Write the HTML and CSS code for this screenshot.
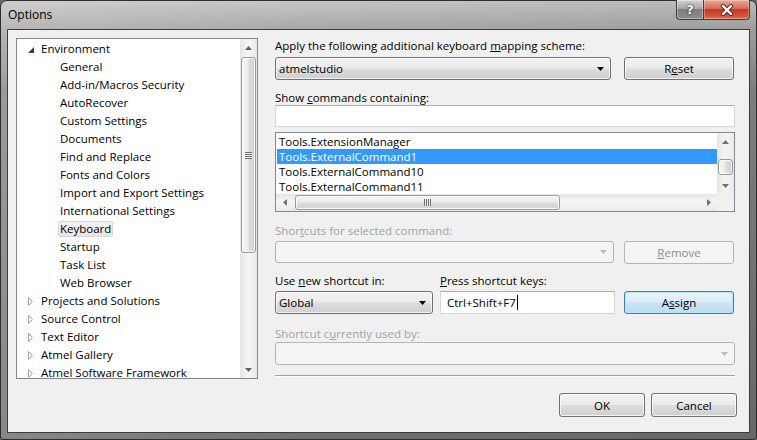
FILE: index.html
```html
<!DOCTYPE html>
<html>
<head>
<meta charset="utf-8">
<title>Options</title>
<link rel="stylesheet" href="styles.css">
</head>
<body>
<div class="window">
  <div class="titlebar">
    <span class="title">Options</span>
    <div class="caption">
      <div class="cap-help">?</div>
      <div class="cap-close">
        <svg width="14" height="12" viewBox="0 0 14 12"><path d="M3 2 L11 10 M11 2 L3 10" stroke="#5a2a20" stroke-width="4.2" stroke-linecap="round"/><path d="M3 2 L11 10 M11 2 L3 10" stroke="#ffffff" stroke-width="2.4" stroke-linecap="round"/></svg>
      </div>
    </div>
  </div>
  <div class="client">
    <div class="main">
      <div class="tree">
        <div class="tree-items">
          <div class="node l0"><span class="exp"><svg width="6" height="6" viewBox="0 0 6 6"><polygon points="6,0 6,6 0,6" fill="#3c3c3c"/></svg></span>Environment</div>
          <div class="node l1">General</div>
          <div class="node l1">Add-in/Macros Security</div>
          <div class="node l1">AutoRecover</div>
          <div class="node l1">Custom Settings</div>
          <div class="node l1">Documents</div>
          <div class="node l1">Find and Replace</div>
          <div class="node l1">Fonts and Colors</div>
          <div class="node l1">Import and Export Settings</div>
          <div class="node l1">International Settings</div>
          <div class="node l1"><span class="tree-sel">Keyboard</span></div>
          <div class="node l1">Startup</div>
          <div class="node l1">Task List</div>
          <div class="node l1">Web Browser</div>
          <div class="node l0"><span class="exp"><svg width="6" height="9" viewBox="0 0 6 9"><polygon points="0.5,0.5 4.5,4.5 0.5,8.5" fill="#fff" stroke="#a6a6a6"/></svg></span>Projects and Solutions</div>
          <div class="node l0"><span class="exp"><svg width="6" height="9" viewBox="0 0 6 9"><polygon points="0.5,0.5 4.5,4.5 0.5,8.5" fill="#fff" stroke="#a6a6a6"/></svg></span>Source Control</div>
          <div class="node l0"><span class="exp"><svg width="6" height="9" viewBox="0 0 6 9"><polygon points="0.5,0.5 4.5,4.5 0.5,8.5" fill="#fff" stroke="#a6a6a6"/></svg></span>Text Editor</div>
          <div class="node l0"><span class="exp"><svg width="6" height="9" viewBox="0 0 6 9"><polygon points="0.5,0.5 4.5,4.5 0.5,8.5" fill="#fff" stroke="#a6a6a6"/></svg></span>Atmel Gallery</div>
          <div class="node l0"><span class="exp"><svg width="6" height="9" viewBox="0 0 6 9"><polygon points="0.5,0.5 4.5,4.5 0.5,8.5" fill="#fff" stroke="#a6a6a6"/></svg></span>Atmel Software Framework</div>
        </div>
        <div class="vscroll tree-scroll">
          <div class="sb-btn"><svg width="7" height="4" viewBox="0 0 7 4"><polygon points="0,4 3.5,0 7,4" fill="#606060"/></svg></div>
          <div class="sb-track">
            <div class="thumb tree-thumb"><span class="grip-v"></span></div>
          </div>
          <div class="sb-btn"><svg width="7" height="4" viewBox="0 0 7 4"><polygon points="0,0 3.5,4 7,0" fill="#606060"/></svg></div>
        </div>
      </div>

      <div class="panel">
        <div class="lbl">Apply the following additional keyboard <u>m</u>apping scheme:</div>
        <div class="row r-scheme">
          <div class="combo w-scheme"><span>atmelstudio</span><svg class="dd" width="7" height="4" viewBox="0 0 7 4"><polygon points="0,0 3.5,4 7,0" fill="#000"/></svg></div>
          <div class="btn w-btn">R<u>e</u>set</div>
        </div>
        <div class="lbl m-show">Show <u>c</u>ommands containing:</div>
        <div class="textbox full"></div>
        <div class="list">
          <div class="list-body">
            <div class="list-items">
              <div class="item">Tools.ExtensionManager</div>
              <div class="item sel">Tools.ExternalCommand1</div>
              <div class="item">Tools.ExternalCommand10</div>
              <div class="item">Tools.ExternalCommand11</div>
            </div>
            <div class="vscroll list-vscroll">
              <div class="sb-btn"><svg width="7" height="4" viewBox="0 0 7 4"><polygon points="0,4 3.5,0 7,4" fill="#707070"/></svg></div>
              <div class="sb-track">
                <div class="thumb list-thumb"></div>
              </div>
              <div class="sb-btn"><svg width="7" height="4" viewBox="0 0 7 4"><polygon points="0,0 3.5,4 7,0" fill="#707070"/></svg></div>
            </div>
          </div>
          <div class="hrow">
            <div class="hscroll">
              <div class="sb-btn h"><svg width="4" height="7" viewBox="0 0 4 7"><polygon points="4,0 0,3.5 4,7" fill="#707070"/></svg></div>
              <div class="h-track">
                <div class="hthumb"><span class="grip-h"></span></div>
              </div>
              <div class="sb-btn h"><svg width="4" height="7" viewBox="0 0 4 7"><polygon points="0,0 4,3.5 0,7" fill="#707070"/></svg></div>
            </div>
            <div class="corner"></div>
          </div>
        </div>
        <div class="lbl dis m-short">Shor<u>t</u>cuts for selected command:</div>
        <div class="row r-short">
          <div class="combo disabled w-short"><span></span><svg class="dd" width="7" height="4" viewBox="0 0 7 4"><polygon points="0,0 3.5,4 7,0" fill="#b8b8b8"/></svg></div>
          <div class="btn disabled w-btn"><u>R</u>emove</div>
        </div>
        <div class="row r-labels">
          <div class="lbl w-uselbl">Use <u>n</u>ew shortcut in:</div>
          <div class="lbl"><u>P</u>ress shortcut keys:</div>
        </div>
        <div class="row r-new">
          <div class="combo w-global"><span>Global</span><svg class="dd" width="7" height="4" viewBox="0 0 7 4"><polygon points="0,0 3.5,4 7,0" fill="#000"/></svg></div>
          <div class="textbox w-keys"><span>Ctrl+Shift+F7</span><span class="caret"></span></div>
          <div class="btn default w-btn">A<u>s</u>sign</div>
        </div>
        <div class="lbl dis m-used">Shortcut c<u>u</u>rrently used by:</div>
        <div class="combo disabled full m-usedbox"><span></span><svg class="dd" width="7" height="4" viewBox="0 0 7 4"><polygon points="0,0 3.5,4 7,0" fill="#b8b8b8"/></svg></div>
        <div class="separator"></div>
      </div>
    </div>
    <div class="footer">
      <div class="btn w-dlg">OK</div>
      <div class="btn w-dlg">Cancel</div>
    </div>
  </div>
</div>
</body>
</html>
```

FILE: styles.css
```css
* {
  box-sizing: border-box;
}

html,
body {
  margin: 0;
  padding: 0;
}

body {
  width: 757px;
  height: 440px;
  overflow: hidden;
  background: #6a6a6a;
  font-family: "Open Sans", "Noto Sans", sans-serif;
  font-size: 11.5px;
  color: #000;
}

u {
  text-decoration: underline;
  text-underline-offset: 1px;
}

/* ---------- window frame ---------- */
.window {
  width: 757px;
  height: 440px;
  display: flex;
  flex-direction: column;
  padding: 0 6px 6px 6px;
  border: 1px solid #2e2e2e;
  border-radius: 7px 7px 3px 3px;
  background:
    linear-gradient(to right, rgba(255,255,255,0.18), rgba(255,255,255,0) 45%, rgba(0,0,0,0.06)),
    linear-gradient(to bottom, #c4c4c4 0, #a9a9a9 26px, #858585 90px, #6e6e6e 100%);
}

.titlebar {
  height: 28px;
  flex: none;
  display: flex;
  justify-content: space-between;
  align-items: flex-start;
}

.title {
  margin-left: 1px;
  line-height: 28px;
  font-size: 12px;
  color: #000;
}

.caption {
  display: flex;
  margin-top: -1px;
}

.cap-help,
.cap-close {
  height: 20px;
  display: flex;
  align-items: center;
  justify-content: center;
  border: 1px solid #3f3f3f;
  border-top: none;
}

.cap-help {
  width: 27px;
  border-radius: 0 0 0 4px;
  border-right: none;
  background: linear-gradient(to bottom, #d2d2d2 0, #a8a8a8 45%, #7e7e7e 50%, #8e8e8e 100%);
  box-shadow: inset 0 0 0 1px rgba(255,255,255,0.35);
  color: #fff;
  font-family: "DejaVu Sans", sans-serif;
  font-weight: bold;
  font-size: 13px;
  text-shadow: 0 0 2px #222, 0 0 1px #222;
}

.cap-close {
  width: 47px;
  border-radius: 0 0 4px 0;
  background: linear-gradient(to bottom, #e9a99c 0, #d86a54 45%, #c43a1f 50%, #d2563a 85%, #e07a5c 100%);
  box-shadow: inset 0 0 0 1px rgba(255,255,255,0.3);
}

/* ---------- client ---------- */
.client {
  flex: 1;
  display: flex;
  flex-direction: column;
  background: #f0f0f0;
  border: 1px solid #3c3c3c;
  padding: 8px 12px 0 8px;
}

.main {
  display: flex;
  align-items: flex-start;
}

/* ---------- tree ---------- */
.tree {
  width: 242px;
  height: 341px;
  flex: none;
  display: flex;
  background: #fff;
  border: 1px solid #828790;
}

.tree-items {
  flex: 1;
  overflow: hidden;
  padding-top: 1px;
}

.node {
  height: 18px;
  line-height: 18px;
  white-space: nowrap;
  display: flex;
  align-items: center;
}

.node.l0 {
  padding-left: 11px;
}

.node.l1 {
  padding-left: 43px;
}

.exp {
  width: 13px;
  display: flex;
  align-items: center;
  padding-top: 1px;
}

.tree-sel {
  display: inline-block;
  height: 16px;
  line-height: 14px;
  padding: 0 1px;
  margin-left: -2px;
  border: 1px solid #d9d9d9;
  border-radius: 2px;
  background: linear-gradient(to bottom, #f2f2f2, #e5e5e5);
}

/* ---------- scrollbars ---------- */
.vscroll {
  width: 17px;
  flex: none;
  display: flex;
  flex-direction: column;
  background: linear-gradient(to right, #e6e6e6, #f3f3f3 40%, #f3f3f3 60%, #e9e9e9);
}

.sb-btn {
  height: 17px;
  flex: none;
  display: flex;
  align-items: center;
  justify-content: center;
}

.sb-btn.h {
  width: 17px;
  height: 17px;
}

.sb-track {
  flex: 1;
  padding: 1px 1px 0 1px;
}

.thumb {
  border: 1px solid #9a9a9a;
  border-radius: 3px;
  background: linear-gradient(to right, #f6f6f6 0, #ececec 45%, #dcdcdc 55%, #d2d2d2 100%);
  box-shadow: inset 0 0 0 1px rgba(255,255,255,0.8);
  display: flex;
  align-items: center;
  justify-content: center;
}

.tree-thumb {
  height: 196px;
}

.grip-v {
  width: 7px;
  height: 7px;
  background: repeating-linear-gradient(to bottom, #6d6d6d 0, #6d6d6d 1px, #f0f0f0 1px, #f0f0f0 2px);
}

.list-thumb {
  height: 16px;
  margin-top: 8px;
}

/* ---------- panel ---------- */
.panel {
  width: 460px;
  margin-left: 17px;
  display: flex;
  flex-direction: column;
}

.lbl {
  height: 15px;
  line-height: 15px;
  white-space: nowrap;
}

.lbl.dis {
  color: #a2a2a2;
}

.row {
  display: flex;
  align-items: flex-start;
}

.r-scheme {
  margin-top: 4px;
  justify-content: space-between;
}

.m-show {
  margin-top: 10px;
}

.m-short {
  margin-top: 11px;
}

.r-short {
  margin-top: 3px;
  justify-content: space-between;
}

.r-labels {
  margin-top: 9px;
}

.w-uselbl {
  width: 165px;
}

.r-new {
  margin-top: 3px;
}

.m-used {
  margin-top: 12px;
}

.m-usedbox {
  margin-top: 1px;
}

.separator {
  margin-top: 10px;
  height: 2px;
  border-top: 1px solid #a0a0a0;
  border-bottom: 1px solid #ffffff;
}

/* ---------- buttons & combos ---------- */
.btn,
.combo {
  height: 23px;
  border: 1px solid #707070;
  border-radius: 3px;
  background: linear-gradient(to bottom, #f2f2f2 0, #ebebeb 48%, #dddddd 52%, #cfcfcf 100%);
  box-shadow: inset 0 0 0 1px rgba(255,255,255,0.75);
  display: flex;
  align-items: center;
  white-space: nowrap;
}

.btn {
  justify-content: center;
}

.combo {
  justify-content: space-between;
  padding: 0 6px 0 3px;
}

.btn.disabled,
.combo.disabled {
  border-color: #b2b6b9;
  background: #f4f4f4;
  box-shadow: none;
  color: #8c8c8c;
}

.btn.default {
  border-color: #3c7fb1;
  background: linear-gradient(to bottom, #e9f4fb 0, #dcedf9 48%, #c9e4f6 52%, #bcdcf1 100%);
  box-shadow: inset 0 0 0 1px #b6e6fb;
}

.w-scheme {
  width: 336px;
}

.w-btn {
  width: 110px;
  margin-right: 1px;
}

.w-short {
  width: 339px;
  height: 22px;
}

.w-global {
  width: 158px;
  margin-right: 7px;
}

.w-dlg {
  width: 86px;
  height: 24px;
}

.full {
  width: 460px;
}

.textbox {
  height: 22px;
  background: #fff;
  border: 1px solid #d5d7db;
  border-top-color: #abadb3;
  display: flex;
  align-items: center;
}

.w-keys {
  width: 175px;
  height: 23px;
  margin-right: 9px;
  padding-left: 6px;
}

.caret {
  width: 1px;
  height: 15px;
  background: #000;
  margin-left: 1px;
}

/* ---------- list ---------- */
.list {
  margin-top: 5px;
  height: 80px;
  border: 1px solid #828790;
  background: #fff;
  display: flex;
  flex-direction: column;
}

.list-body {
  height: 61px;
  display: flex;
}

.list-items {
  flex: 1;
  padding-top: 1px;
}

.item {
  height: 15px;
  line-height: 15px;
  padding-left: 2px;
  margin-left: 1px;
  white-space: nowrap;
}

.item.sel {
  background: #3399ff;
  color: #fff;
}

.list-vscroll .sb-btn {
  height: 17px;
}

.hrow {
  height: 17px;
  display: flex;
}

.hscroll {
  flex: 1;
  display: flex;
  background: linear-gradient(to bottom, #e6e6e6, #f3f3f3 40%, #f3f3f3 60%, #e9e9e9);
}

.h-track {
  flex: 1;
  padding: 1px 0 1px 2px;
}

.hthumb {
  width: 265px;
  height: 15px;
  border: 1px solid #9a9a9a;
  border-radius: 3px;
  background: linear-gradient(to bottom, #f6f6f6 0, #ececec 45%, #dcdcdc 55%, #d2d2d2 100%);
  box-shadow: inset 0 0 0 1px rgba(255,255,255,0.8);
  display: flex;
  align-items: center;
  justify-content: center;
}

.grip-h {
  width: 7px;
  height: 7px;
  background: repeating-linear-gradient(to right, #6d6d6d 0, #6d6d6d 1px, #f0f0f0 1px, #f0f0f0 2px);
}

.corner {
  width: 17px;
  background: #f0f0f0;
}

/* ---------- footer ---------- */
.footer {
  margin-top: 14px;
  display: flex;
  justify-content: flex-end;
  gap: 6px;
}
```
